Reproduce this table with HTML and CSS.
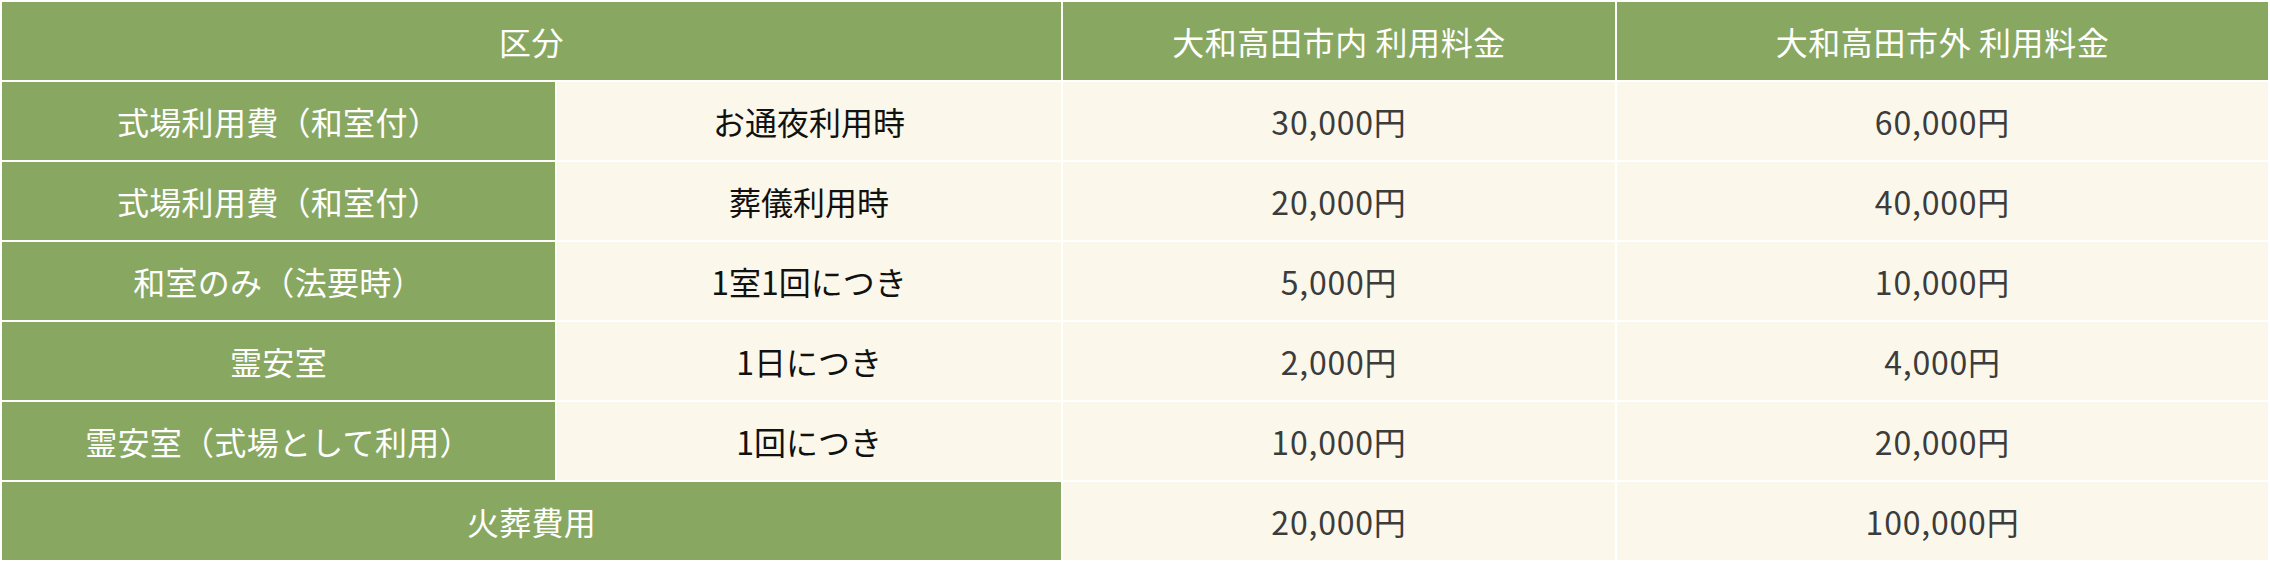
FILE: index.html
```html
<!DOCTYPE html>
<html lang="ja">
<head>
<meta charset="utf-8">
<title>利用料金</title>
<link rel="stylesheet" href="styles.css">
</head>
<body>
<table class="fees">
  <colgroup>
    <col class="c1">
    <col class="c2">
    <col class="c3">
    <col class="c4">
  </colgroup>
  <thead>
    <tr>
      <th class="head" colspan="2">区分</th>
      <th class="head">大和高田市内 利用料金</th>
      <th class="head">大和高田市外 利用料金</th>
    </tr>
  </thead>
  <tbody>
    <tr>
      <th class="label">式場利用費（和室付）</th>
      <td class="sub">お通夜利用時</td>
      <td class="price">30,000円</td>
      <td class="price">60,000円</td>
    </tr>
    <tr>
      <th class="label">式場利用費（和室付）</th>
      <td class="sub">葬儀利用時</td>
      <td class="price">20,000円</td>
      <td class="price">40,000円</td>
    </tr>
    <tr>
      <th class="label">和室のみ（法要時）</th>
      <td class="sub">1室1回につき</td>
      <td class="price">5,000円</td>
      <td class="price">10,000円</td>
    </tr>
    <tr>
      <th class="label">霊安室</th>
      <td class="sub">1日につき</td>
      <td class="price">2,000円</td>
      <td class="price">4,000円</td>
    </tr>
    <tr>
      <th class="label">霊安室（式場として利用）</th>
      <td class="sub">1回につき</td>
      <td class="price">10,000円</td>
      <td class="price">20,000円</td>
    </tr>
    <tr>
      <th class="label" colspan="2">火葬費用</th>
      <td class="price">20,000円</td>
      <td class="price">100,000円</td>
    </tr>
  </tbody>
</table>
</body>
</html>
```
FILE: styles.css
```css
html, body {
  margin: 0;
  padding: 0;
  background: #ffffff;
}

.fees {
  width: 2270px;
  table-layout: fixed;
  border-collapse: separate;
  border-spacing: 2px;
  font-family: "Noto Sans CJK JP", "Noto Sans", sans-serif;
  font-size: 32px;
  font-weight: 400;
}

.c1 { width: 553px; }
.c2 { width: 504px; }
.c3 { width: 552px; }
.c4 { width: 651px; }

.fees th,
.fees td {
  height: 78px;
  padding: 0;
  text-align: center;
  vertical-align: middle;
  line-height: 1.2;
}

.head,
.label {
  background: #88a862;
  color: #ffffff;
  font-weight: 400;
}

.head {
  letter-spacing: 0.6px;
}

.label {
  letter-spacing: 0.3px;
}

.sub {
  background: #fbf8eb;
  color: #111111;
}

.price {
  background: #fbf8eb;
  color: #3c3c3c;
  letter-spacing: 0.8px;
}
```
